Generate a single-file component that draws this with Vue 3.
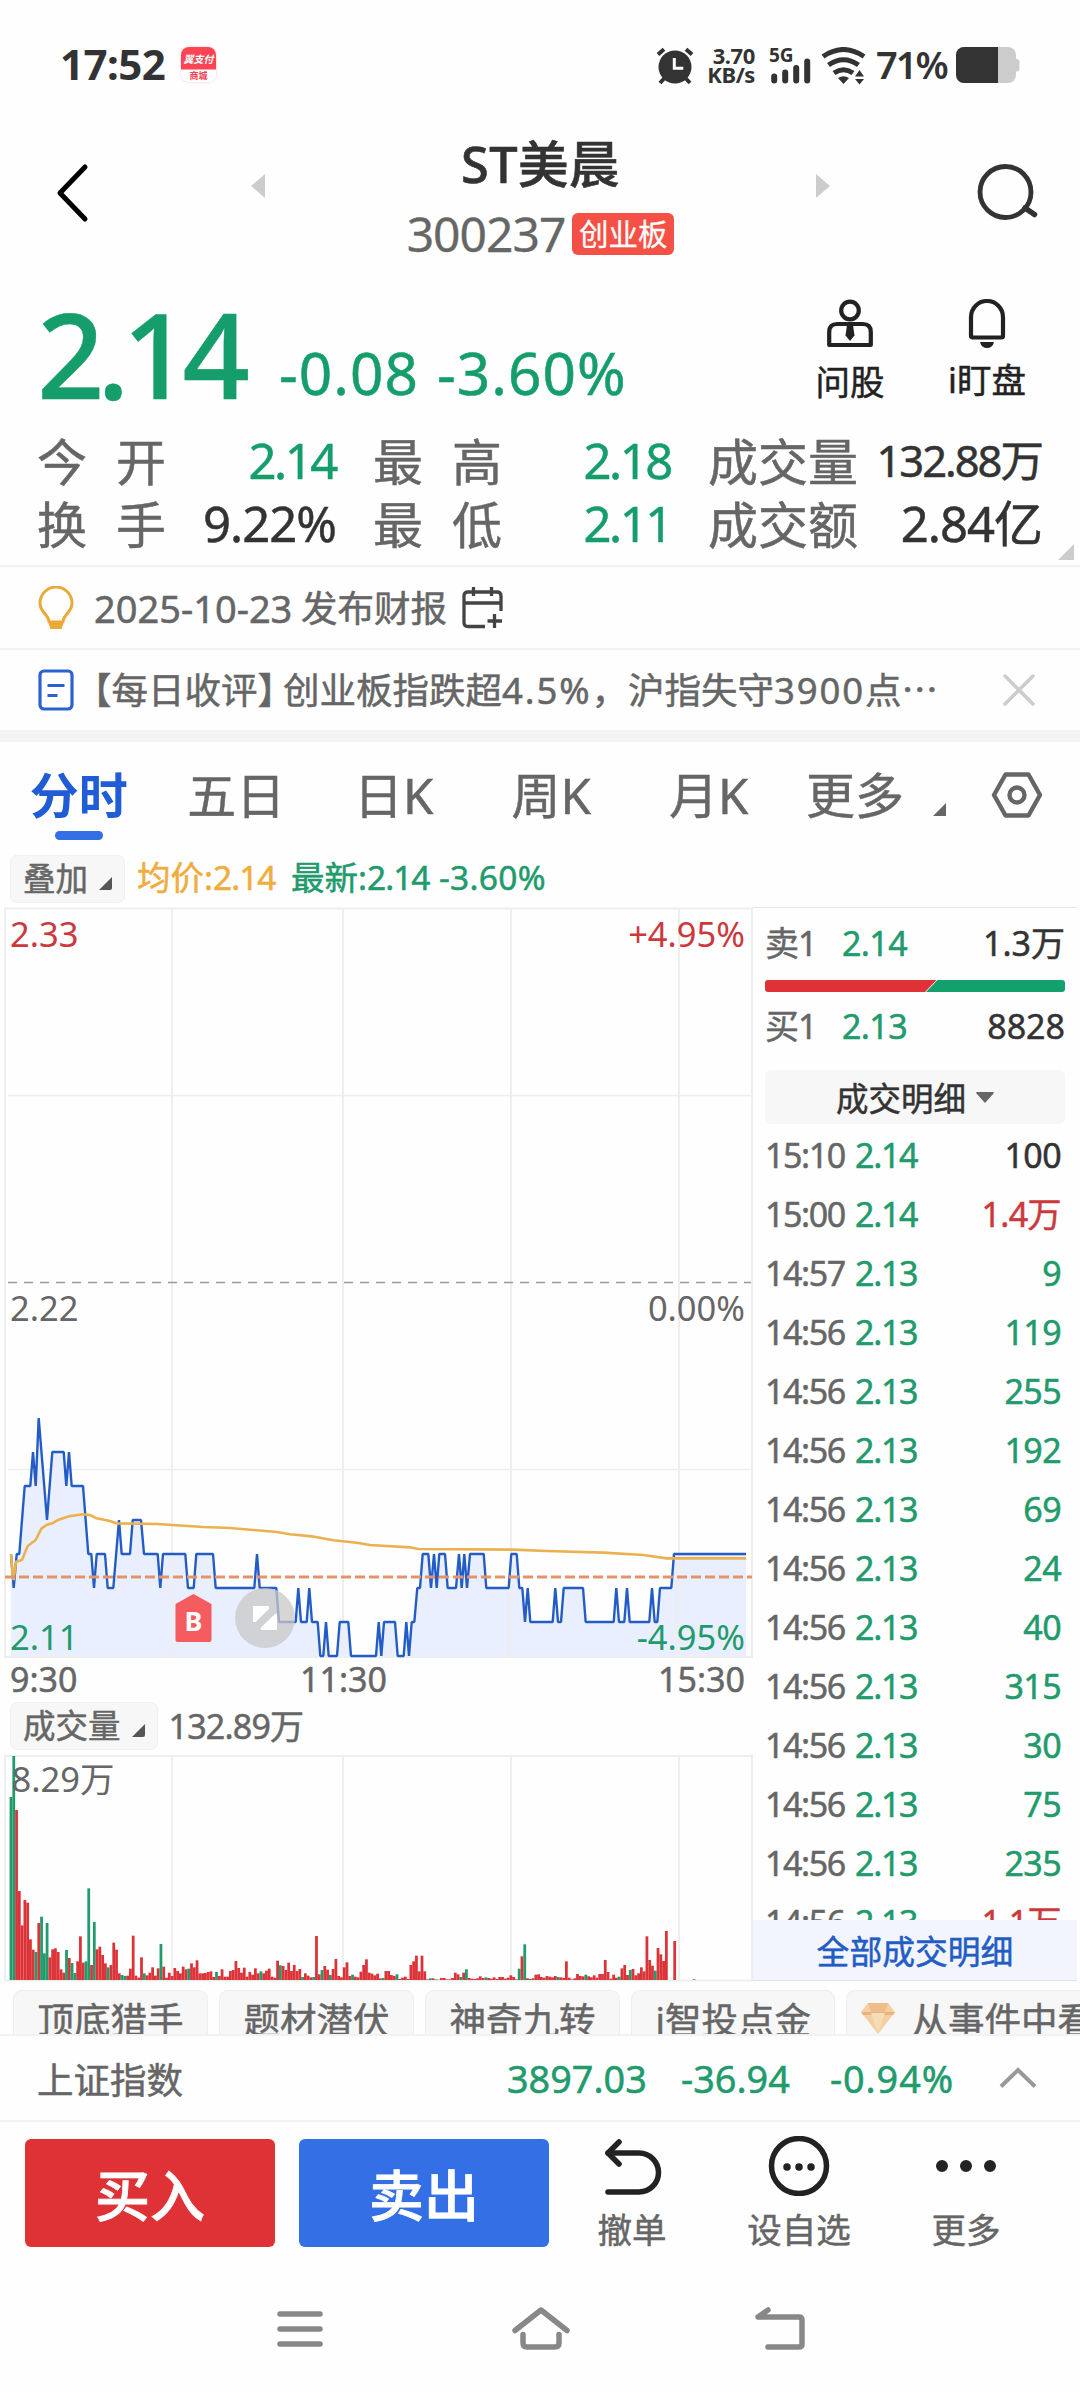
<template>
  <div class="screen">
    <div class="status">
      <span class="clock">17:52</span>
      <span class="pay"><i>翼支付</i><b>商城</b></span>
      <div class="status-right">
        <svg class="alarm" width="38" height="38" viewBox="0 0 38 38">
          <circle cx="19" cy="20" r="16.5" fill="#333" />
          <path d="M2 7.5L8 2.2M36 7.5L30 2.2M4 36l5-5.500M34 36l-5-5.500" stroke="#333" stroke-width="4" fill="none" />
          <path d="M18.300 11v10.300h9" stroke="#fff" stroke-width="3" fill="none" />
        </svg>
        <span class="speed"><i>3.70</i><i>KB/s</i></span>
        <svg class="signal" width="43" height="38" viewBox="0 0 43 38">
          <text x="0" y="14.500" class="g5">5G</text>
          <path d="M5.200 29.500v4M16.200 25.500v8M27.200 21v12.500M38.200 14.500v19" stroke="#333" stroke-width="6" stroke-linecap="round" />
        </svg>
        <svg class="wifi" width="46" height="38" viewBox="0 0 46 38">
          <g fill="none" stroke="#333" stroke-width="5">
            <path d="M2 9.500q20.500-14 41 0" />
            <path d="M7.500 18q15-10.500 30 0" />
            <path d="M13 26q9.500-6.500 19 0" />
          </g>
          <path d="M17 31q5.500-3.500 11 0l-5.500 6z" fill="#333" />
          <path d="M34 29.500l4.500-6.500 4.500 6.500zM34 32l4.500 5.500 4.500-5.500z" fill="#333" />
        </svg>
        <span class="percent">71%</span>
        <svg class="battery" width="64" height="36" viewBox="0 0 64 36">
          <rect x="0" y="0" width="60" height="36" rx="8" fill="#ccc" />
          <rect x="57" y="12" width="6.500" height="12.500" rx="3" fill="#ccc" />
          <path d="M8 0H42V36H8a8 8 0 0 1-8-8V8a8 8 0 0 1 8-8z" fill="#333" />
        </svg>
      </div>
    </div>

    <header class="header">
      <svg class="back" width="34" height="60" viewBox="0 0 34 60">
        <path d="M30 4L5 30l25 26" fill="none" stroke="#000" stroke-width="5" stroke-linecap="round" stroke-linejoin="round" />
      </svg>
      <svg class="prev" width="14" height="24" viewBox="0 0 14 24"><path d="M14 0v24L0 12z" fill="#ccc" /></svg>
      <div class="title">
        <h1>ST美晨</h1>
        <div class="code"><span>300237</span><em>创业板</em></div>
      </div>
      <svg class="next" width="14" height="24" viewBox="0 0 14 24"><path d="M0 0v24l14-12z" fill="#ccc" /></svg>
      <svg class="search" width="64" height="60" viewBox="0 0 64 60">
        <circle cx="29.500" cy="30" r="25.500" fill="none" stroke="#333" stroke-width="4.800" />
        <path d="M49 46l9.500 6.500" stroke="#333" stroke-width="5.500" stroke-linecap="round" />
      </svg>
    </header>

    <section class="quote">
      <div class="price-row">
        <span class="price">2.14</span>
        <span class="change">-0.08</span>
        <span class="change pct">-3.60%</span>
        <div class="tool ask">
          <svg width="48" height="50" viewBox="0 0 48 50" fill="none" stroke="#222" stroke-width="4.200">
            <circle cx="24" cy="11.500" r="8.800" />
            <path d="M3.200 46V33q0-8 8-8h25.600q8 0 8 8v13z" stroke-linejoin="round" />
            <path d="M21 26h6l1.500 10.500L24 42l-4.500-5.500z" fill="#222" stroke="none" />
          </svg>
          <span>问股</span>
        </div>
        <div class="tool watch">
          <svg width="40" height="50" viewBox="0 0 40 50">
            <path d="M4 37V18a16 16 0 0 1 32 0v19q0 1.500-1.500 1.500h-29Q4 38.500 4 37z" fill="none" stroke="#222" stroke-width="4.200" />
            <path d="M13 43h14q-1.500 6-7 6t-7-6z" fill="#222" />
          </svg>
          <span>i盯盘</span>
        </div>
      </div>
      <div class="stats">
        <div v-for="s in stats" :key="s.label" class="stat">
          <span :class="['label', { wide: s.label.length === 2 }]">{{ s.label }}</span>
          <span :class="['value', { up: s.green, small: s.small }]">{{ s.value }}</span>
        </div>
      </div>
      <svg class="corner" width="16" height="16" viewBox="0 0 16 16"><path d="M16 0v16H0z" fill="#ccc" /></svg>
    </section>

    <div class="notice">
      <svg class="bulb" width="36" height="44" viewBox="0 0 36 44" fill="none" stroke="#eba937" stroke-width="3">
        <path d="M11 36c0-8-9-9-9-19a16 16 0 0 1 32 0c0 10-9 11-9 19z" stroke-linejoin="round" />
        <path d="M11 38.500h14M12 41.500h12" />
      </svg>
      <span class="date">2025-10-23</span>
      <span>发布财报</span>
      <svg class="calendar" width="42" height="42" viewBox="0 0 42 42" fill="none" stroke="#444" stroke-width="3.300">
        <path d="M23 39.500H6q-4 0-4-4V9q0-4 4-4h29q4 0 4 4v15M2 16h37M11.500 0v9M29.500 0v9M32.500 27v14M25.500 34h14.500" />
      </svg>
    </div>

    <div class="notice news">
      <svg class="doc" width="36" height="42" viewBox="0 0 36 42" fill="none" stroke="#2b62cf" stroke-width="3.200">
        <rect x="2" y="2" width="32" height="38" rx="4" />
        <path d="M9.500 16.500h17M9.500 26.500h10" />
      </svg>
      <span class="headline">【每日收评<i>】</i>创业板指跌超<em>4.5%</em>，沪指失守<em>3900</em>点⋯</span>
      <svg class="close" width="32" height="32" viewBox="0 0 32 32">
        <path d="M2 2l28 28M30 2L2 30" stroke="#ccc" stroke-width="3.500" stroke-linecap="round" />
      </svg>
    </div>

    <nav class="tabs">
      <span v-for="(t, i) in tabs" :key="t" :class="['tab', { active: i === 0 }]">{{ t }}</span>
      <span class="more">更多</span>
      <svg class="tri" width="13" height="13" viewBox="0 0 13 13"><path d="M13 0v13H0z" fill="#666" /></svg>
      <svg class="hex" width="52" height="48" viewBox="0 0 52 48" fill="none" stroke="#666" stroke-width="4.400">
        <path d="M14.500 3.500h23L49 24 37.500 44.500h-23L3 24z" stroke-linejoin="round" />
        <circle cx="26" cy="24" r="7.500" />
      </svg>
    </nav>

    <div class="legend">
      <span class="chip">叠加<svg width="13" height="13" viewBox="0 0 13 13"><path d="M13 0v11q0 2-2 2H0z" fill="#555" /></svg></span>
      <span class="avg">均价:<i>2.14</i></span>
      <span class="latest">最新:<i>2.14</i></span>
      <span class="latest rate">-3.60%</span>
    </div>

    <main class="market">
      <div class="charts">
        <svg class="chart" width="753" height="752" viewBox="0 907 753 752">
          <path :d="areaPath" fill="#e9effe" />
          <g fill="none" stroke="#eee" stroke-width="2">
            <path d="M5 1658V908.500H752M172 908v749M343 908v749M511 908v749M679 908v749" />
            <path d="M8 1095.500h743M8 1469.500h743" stroke-width="1.500" />
            <path d="M5 1657h747M752 908v750" />
          </g>
          <path d="M8 1282.500h743" stroke="#999" stroke-width="1.300" stroke-dasharray="9 7" />
          <path :d="pricePath" fill="none" stroke="#245cc6" stroke-width="2.400" stroke-linejoin="bevel" />
          <polyline :points="avgPoints" fill="none" stroke="#ecb14f" stroke-width="2.600" />
          <path d="M5 1577h747" stroke="#e5946a" stroke-width="3" stroke-dasharray="10 4" />
          <path d="M175.500 1604l18-10 18 10v36q0 2-2 2h-32q-2 0-2-2z" fill="#f55c60" />
          <text x="193.500" y="1631" class="buy" text-anchor="middle">B</text>
          <circle cx="265" cy="1618" r="30" fill="#c8c8c8" fill-opacity="0.750" />
          <path d="M253 1607q0-1 1-1h15v3l-13.500 13H253zM277 1614v15q0 1-1 1h-15v-2.500l14-13.500z" fill="#fff" />
          <text x="10" y="946.500" class="t red">2.33</text>
          <text x="745" y="946.500" class="t red" text-anchor="end">+4.95%</text>
          <text x="10" y="1320.500" class="t grey">2.22</text>
          <text x="745" y="1320.500" class="t grey" text-anchor="end">0.00%</text>
          <text x="10" y="1650" class="t green">2.11</text>
          <text x="745" y="1650" class="t green" text-anchor="end">-4.95%</text>
        </svg>
        <div class="axis"><span>9:30</span><span>11:30</span><span>15:30</span></div>
        <div class="volume-head">
          <span class="chip">成交量<svg width="13" height="13" viewBox="0 0 13 13"><path d="M13 0v11q0 2-2 2H0z" fill="#555" /></svg></span>
          <span>132.89万</span>
        </div>
        <svg class="chart" width="753" height="228" viewBox="0 1754 753 228">
          <path d="M5 1981V1756H752M172 1756v224M343 1756v224M511 1756v224M679 1756v224M5 1980.500h747M752 1754v227" fill="none" stroke="#eee" stroke-width="2" />
          <rect v-for="b in bars" :key="b.x" :x="b.x" :y="b.y" width="2.780" :height="b.h" :fill="b.fill" />
          <text x="11.500" y="1792" class="t grey">8.29万</text>
        </svg>
      </div>

      <aside class="book">
        <div class="level"><span>卖1</span><b>2.14</b><em>1.3万</em></div>
        <svg class="ratio" width="300" height="12" viewBox="0 0 300 12">
          <path d="M3 0H171.500L160 12H3q-3 0-3-3V3q0-3 3-3z" fill="#df3237" />
          <path d="M172.500 0H297q3 0 3 3v6q0 3-3 3H161z" fill="#12a06c" />
        </svg>
        <div class="level"><span>买1</span><b>2.13</b><em>8828</em></div>
        <div class="detail">成交明细<svg width="18" height="11" viewBox="0 0 18 11"><path d="M1 0h16q1.500.500.500 1.500L9 11 .500 1.500Q-.500.500 1 0z" fill="#666" /></svg></div>
        <div class="ticks">
          <div v-for="(t, i) in ticks" :key="i" class="tick">
            <span>{{ t[0] }}</span><b>{{ t[1] }}</b><em :class="t[3]">{{ t[2] }}</em>
          </div>
        </div>
        <div class="all">全部成交明细</div>
      </aside>
    </main>

    <div class="tags">
      <span v-for="t in tags" :key="t" class="tag">{{ t }}</span>
      <span class="tag gem">
        <svg width="34" height="31" viewBox="0 0 34 31">
          <path d="M7 0h20l7 9-17 22L0 9z" fill="#f4cfa2" />
          <path d="M7 0h20l-3 9H10z" fill="#efbd8a" />
          <path d="M0 9h34l-2 3H2z" fill="#eab27c" />
          <path d="M10 10h14l-7 20z" fill="#f8dcb8" />
        </svg>从事件中看
      </span>
    </div>

    <div class="index">
      <span class="name">上证指数</span>
      <b>3897.03</b><b>-36.94</b><b class="wider">-0.94%</b>
      <svg width="38" height="22" viewBox="0 0 38 22"><path d="M2 19.500L19 3l17 16.500" fill="none" stroke="#999" stroke-width="4" /></svg>
    </div>

    <div class="actions">
      <button class="buy-btn">买入</button>
      <button class="sell-btn">卖出</button>
      <div class="action undo">
        <svg width="62" height="60" viewBox="0 0 62 60" fill="none" stroke="#222" stroke-width="5.500">
          <path d="M18 6L7 17l11 11" stroke-linecap="round" stroke-linejoin="round" />
          <path d="M7 17h31a19.500 19.500 0 0 1 0 39H7" stroke-linecap="round" />
        </svg>
        <span>撤单</span>
      </div>
      <div class="action fav">
        <svg width="62" height="60" viewBox="0 0 62 60">
          <circle cx="31" cy="30" r="27.500" fill="none" stroke="#222" stroke-width="5.500" />
          <path d="M19 31h.01M31 31h.01M43 31h.01" stroke="#222" stroke-width="7.500" stroke-linecap="round" />
        </svg>
        <span>设自选</span>
      </div>
      <div class="action rest">
        <svg width="62" height="60" viewBox="0 0 62 60">
          <path d="M7 30h.01M31 30h.01M55 30h.01" stroke="#222" stroke-width="12" stroke-linecap="round" />
        </svg>
        <span>更多</span>
      </div>
    </div>

    <div class="system">
      <svg width="46" height="38" viewBox="0 0 46 38"><path d="M3 4h40M3 19h40M3 34h40" stroke="#888" stroke-width="5.500" stroke-linecap="round" /></svg>
      <svg width="60" height="46" viewBox="0 0 60 46" fill="none" stroke="#888" stroke-width="5.500" stroke-linecap="round" stroke-linejoin="round">
        <path d="M4 24.500L30 4l26 20.500" />
        <path d="M12 28.500V37q0 4 4 4h28q4 0 4-4v-8.500" />
      </svg>
      <svg width="52" height="46" viewBox="0 0 52 46" fill="none" stroke="#888" stroke-width="5.500" stroke-linecap="round" stroke-linejoin="round">
        <path d="M14 4L4 11h41q3 0 3 3v24q0 3-3 3H14" />
      </svg>
    </div>
  </div>
</template>

<script setup>
const stats = [
  { label: '今开', value: '2.14', green: true },
  { label: '最高', value: '2.18', green: true },
  { label: '成交量', value: '132.88万', small: true },
  { label: '换手', value: '9.22%' },
  { label: '最低', value: '2.11', green: true },
  { label: '成交额', value: '2.84亿' }
]

const tabs = ['分时', '五日', '日K', '周K', '月K']
const tags = ['顶底猎手', '题材潜伏', '神奇九转', 'i智投点金']

const ticks = [
  ['15:10', '2.14', '100', 'flat'],
  ['15:00', '2.14', '1.4万', 'red'],
  ['14:57', '2.13', '9'],
  ['14:56', '2.13', '119'],
  ['14:56', '2.13', '255'],
  ['14:56', '2.13', '192'],
  ['14:56', '2.13', '69'],
  ['14:56', '2.13', '24'],
  ['14:56', '2.13', '40'],
  ['14:56', '2.13', '315'],
  ['14:56', '2.13', '30'],
  ['14:56', '2.13', '75'],
  ['14:56', '2.13', '235'],
  ['14:56', '2.13', '1.1万', 'red']
]

// x (in thirds of a pixel) and the cents above 2.00
const prices = `33,14 41,13 50,14 58,14 74,16 91,16 99,17 107,16 116,18 141,15 157,17 191,17 199,16 207,17 215,16
249,16 265,14 274,14 282,13 290,14 315,14 323,13 340,13 357,15 365,14 390,14 398,15 423,15 432,14 473,14 481,13
489,14 556,14 564,13 581,13 589,14 639,14 647,13 763,13 771,14 779,13 829,13 837,12 887,12 895,13 903,12 920,12
928,13 936,12 953,12 961,11 970,11 978,12 986,11 1011,11 1019,12 1045,12 1053,11 1128,11 1136,12 1144,11 1152,12
1185,12 1193,11 1211,11 1219,12 1227,11 1235,12 1243,12 1252,13 1260,13 1268,14 1285,14 1293,13 1302,14 1310,13
1318,14 1335,14 1343,13 1368,13 1377,14 1385,13 1393,14 1401,13 1410,14 1451,14 1459,13 1526,13 1534,14 1550,14
1558,13 1567,13 1575,12 1583,13 1591,12 1658,12 1666,13 1674,12 1683,12 1691,13 1749,13 1757,12 1841,12 1849,13
1857,12 1873,12 1881,13 1889,12 1948,12 1956,13 1964,12 1972,12 1980,13 2014,13 2022,14 2238,14`
  .split(/\s+/)
  .map((p) => p.split(',').map(Number))

const pricePath = 'M' + prices.map(([x, c]) => `${(x / 3).toFixed(1)} ${1554 - (c - 14) * 34}`).join('L')
const areaPath = `${pricePath}V1657H11z`

const avgPoints = [
  [33, 522], [38, 590], [41, 600], [48, 545], [66, 540], [83, 498], [107, 480], [124, 446], [141, 434],
  [157, 430], [174, 420], [207, 409], [249, 403], [270, 405], [290, 415], [330, 423], [350, 430], [470, 432],
  [610, 441], [690, 444], [830, 456], [870, 463], [935, 469], [1000, 481], [1070, 488], [1110, 495],
  [1230, 502], [1255, 507], [1540, 509], [1640, 513], [1810, 518], [1930, 525], [2000, 535], [2238, 535]
].map(([x, y]) => `${x / 3},${1380 + y / 3}`).join(' ')

// one entry per minute, g marks a falling bar
const volumes = `549g 672g 510 267 164 240 232 122 91 84g 171 190g 80g 171g 68 92 95 84 32 22 90g 66 51g 21g 56 131 52
56g 275g 45 174g 92 100 75 50 38g 45 112 91 20 15g 12g 13 34 133 13 7 68 20g 14 22 38 13 35 108g 40 7 22 12 36 27 20
40 32 34g 50 38 59 20 20 21 24 26 9 24g 12 32 10 10 27 30 57 36 22 37 10 24 16 35 20 26g 20 28 34 10 7 58 44g 42 30
52 27 45 27 33 9g 20 13 8 9g 132 17 30g 42 31 15g 33 63 12 8 38 53 12 16g 10 8 25 45 62 22 19 14 19 5 6g 27 27 15 12
17g 3 7 10 3 45 56 73 26 73 26 2 5g 5 2g 1 6 6 2 2 6 22 17 9g 22 32g 6 4 3 5 11 6 8g 6 4 8 3 9 9 4 7 14 9 2 34g 71
107g 5 3g 5 16 17 9 7 12 10 8 12 9g 8 6 56 7 2 5 18 12 11 16g 11 8 14 7 18 18 60 24 4 16 7 10g 35 45 15 30g 33 14
20 38 26 131 60 43 28g 96 77 57 147 0 0 117 0 0 0 0 0 0 2`.split(/\s+/)

const bars = volumes.map((v, i) => {
  const h = parseInt(v) / 3
  return {
    x: 9.6 + i * 2.777,
    y: 1980 - h,
    h,
    fill: v.endsWith('g') ? '#219a6c' : '#dc3338'
  }
})
</script>

<style>
body {
  margin: 0;
  background: #fefefe;
}
</style>

<style scoped>
.screen {
  width: 1080px;
  height: 2392px;
  overflow: hidden;
  background: #fefefe;
  color: #666;
  font-family: "Noto Sans", "Noto Sans CJK SC", sans-serif;
  -webkit-text-stroke: 0.5px currentColor;
}

i,
em,
b {
  font-style: normal;
  font-weight: 400;
}

svg {
  display: block;
  flex: none;
}

span {
  white-space: nowrap;
}

/* Status bar */
.status {
  display: flex;
  height: 36px;
  padding: 47px 60px 0;
  color: #333;
  -webkit-text-stroke: 0;
}

.clock {
  width: 121px;
  font-size: 42px;
  font-weight: 700;
  line-height: 34px;
  letter-spacing: -0.5px;
}

.pay {
  width: 35px;
  height: 35px;
  border-radius: 8px;
  overflow: hidden;
  background: linear-gradient(#fb4454 22px, #fff 23px);
  box-shadow: 0 0 2px #f5b0b4;
  text-align: center;
}

.pay i,
.pay b {
  display: block;
  height: 22px;
  color: #fff;
  font-size: 10px;
  font-weight: 700;
  font-style: italic;
  line-height: 25px;
}

.pay b {
  height: 12px;
  color: #f34455;
  font-size: 9px;
  font-style: normal;
  line-height: 13px;
}

.status-right {
  display: flex;
  margin-left: auto;
}

.speed {
  width: 48px;
  margin: 0 14px 0 13px;
  text-align: right;
  font-size: 22px;
  letter-spacing: -0.4px;
}

.speed i {
  display: block;
  font-weight: 700;
  line-height: 17px;
  height: 19px;
}

.signal {
  margin-right: 9px;
}

.g5 {
  font-size: 19px;
  font-weight: 700;
  fill: #333;
}

.percent {
  width: 81px;
  padding-left: 9px;
  box-sizing: border-box;
  font-size: 38px;
  font-weight: 600;
  line-height: 34px;
  letter-spacing: -2px;
}

.battery {
  margin-left: 8px;
}

/* Header */
.header {
  display: flex;
  align-items: flex-start;
  height: 197px;
  padding: 0 40px 0 55px;
}

.back {
  margin-top: 80px;
}

.prev {
  margin: 91px 0 0 162px;
}

.title {
  flex: 1;
  text-align: center;
}

.title h1 {
  margin: 51px 0 0;
  font-size: 50.5px;
  font-weight: 500;
  line-height: 60px;
  letter-spacing: 0.5px;
  color: #333;
  -webkit-text-stroke: 0.6px #333;
}

.code {
  display: flex;
  justify-content: center;
  align-items: center;
  margin-top: 18px;
  height: 44px;
  font-size: 48px;
  line-height: 46px;
  letter-spacing: -1px;
  -webkit-text-stroke: 0.3px currentColor;
}

.code em {
  margin-left: 7px;
  width: 102px;
  height: 42px;
  line-height: 42px;
  border-radius: 6px;
  background: #f45046;
  color: #fff;
  font-size: 29.5px;
  letter-spacing: 0;
}

.next {
  margin: 91px 146px 0 0;
}

.search {
  margin-top: 79px;
}

/* Quote */
.quote {
  position: relative;
  height: 285px;
  border-bottom: 2px solid #f2f2f2;
}

.price-row {
  display: flex;
  height: 149px;
  color: #159d6b;
}

.price {
  width: 242px;
  padding-left: 37px;
  font-size: 118px;
  font-weight: 500;
  line-height: 147px;
  letter-spacing: -7.2px;
}

.change {
  width: 158px;
  padding-top: 56px;
  font-size: 58.5px;
  line-height: 73px;
  letter-spacing: 1px;
}

.pct {
  width: 361px;
}

.tool {
  display: flex;
  flex-direction: column;
  align-items: center;
  padding-top: 19px;
  color: #222;
  font-size: 34.5px;
}

.tool span {
  margin-top: 13px;
  line-height: 40px;
}

.ask {
  width: 104px;
}

.watch {
  width: 170px;
}

.watch span {
  margin-top: 11px;
}

.stats {
  display: grid;
  grid-template-columns: 299px 298px 334px;
  column-gap: 37px;
  grid-auto-rows: 63px;
  padding-left: 37px;
}

.stat {
  display: flex;
  justify-content: space-between;
  font-size: 50px;
  line-height: 63px;
}

.wide {
  letter-spacing: 29px;
}

.label {
  margin-top: 2px;
}

.value {
  color: #333;
  font-size: 49px;
  letter-spacing: -1px;
}

.up {
  color: #159d6b;
  letter-spacing: -2.4px;
}

.small {
  font-size: 43.5px;
  letter-spacing: -2px;
}

.corner {
  position: absolute;
  right: 6px;
  bottom: 5px;
}

/* Notices */
.notice {
  display: flex;
  align-items: center;
  height: 81px;
  padding-left: 38px;
  border-bottom: 2px solid #f2f2f2;
  font-size: 36.5px;
  line-height: 48px;
}

.date {
  width: 207px;
  margin-left: 20px;
  font-size: 38px;
}

.calendar {
  margin-left: 15px;
}

.news {
  height: 80px;
  border-bottom: 12px solid #f4f4f4;
}

.headline {
  width: 900px;
  margin-left: 1px;
}

.headline i {
  margin-right: -11px;
}

.headline em {
  letter-spacing: 1.9px;
}

.close {
  margin-left: 28px;
}

/* Tabs */
.tabs {
  display: flex;
  height: 109px;
  font-size: 49px;
  line-height: 107px;
}

.tab {
  position: relative;
  width: 157.5px;
  text-align: center;
}

.active {
  color: #1f5cd6;
  font-weight: 700;
  -webkit-text-stroke: 0;
}

.active::after {
  content: "";
  position: absolute;
  left: 55px;
  top: 89px;
  width: 48px;
  height: 9px;
  border-radius: 5px;
  background: #346fe5;
}

.more {
  width: 117px;
  margin-left: 18.5px;
}

.tri {
  margin: 61px 45px 0 10px;
}

.hex {
  margin-top: 29px;
}

/* Legend */
.legend {
  display: flex;
  align-items: center;
  height: 56px;
  padding-left: 10px;
  font-size: 33.5px;
  line-height: 44px;
}

.legend > span:not(.chip) {
  margin-top: -5px;
}

.legend i {
  letter-spacing: -1px;
}

.chip {
  display: flex;
  align-items: center;
  height: 48px;
  box-sizing: border-box;
  padding: 0 12px;
  border: 1px solid #f0f0f0;
  border-radius: 7px;
  background: #f7f7f7;
  font-size: 32.5px;
  line-height: 46px;
}

.chip svg {
  margin: 8px 0 0 11px;
}

.avg {
  width: 154px;
  margin-left: 12px;
  color: #f0ac3f;
}

.latest {
  width: 148px;
  color: #219a6c;
}

.rate {
  letter-spacing: 0.3px;
}

/* Charts */
.market {
  display: flex;
  height: 1075px;
}

.charts {
  width: 753px;
}

.t {
  font-size: 34.5px;
}

.red {
  fill: #cc393d;
}

.grey {
  fill: #666;
}

.green {
  fill: #219a6c;
}

.buy {
  font-size: 27px;
  font-weight: 700;
  fill: #fff;
}

.axis {
  display: grid;
  grid-template-columns: 1fr 1fr 1fr;
  height: 43px;
  padding: 0 8px 0 10px;
  font-size: 34px;
  line-height: 40px;
}

.axis span:nth-child(2) {
  margin-left: -68px;
  text-align: center;
}

.axis span:last-child {
  text-align: right;
}

.volume-head {
  display: flex;
  align-items: center;
  gap: 11px;
  height: 48px;
  padding: 0 0 4px 10px;
  font-size: 34px;
  line-height: 50px;
  letter-spacing: -0.8px;
}

.volume-head .chip {
  letter-spacing: 0;
  line-height: 48px;
}

/* Order book */
.book {
  width: 324px;
  box-sizing: border-box;
  padding: 0 12px;
  border-top: 1px solid #e6e6e6;
}

.level,
.tick {
  display: flex;
  font-size: 34px;
  letter-spacing: -1px;
}

.level {
  height: 72px;
  line-height: 70px;
}

.level span {
  width: 77px;
}

.ratio + .level {
  line-height: 68px;
  height: 78px;
}

b {
  color: #219a6c;
}

.level b {
  letter-spacing: -0.6px;
}

.level em {
  margin-left: auto;
  color: #333;
  letter-spacing: 0;
}

.detail {
  display: flex;
  justify-content: center;
  align-items: center;
  height: 54px;
  border-radius: 6px;
  background: #f7f7f7;
  color: #333;
  font-size: 32.5px;
}

.detail svg {
  margin-left: 10px;
}

.ticks {
  height: 796px;
  overflow: hidden;
}

.tick {
  height: 59px;
  line-height: 63px;
}

.tick span {
  width: 90px;
  letter-spacing: -1.4px;
}

.tick b {
  letter-spacing: -1.3px;
}

.tick em {
  margin: 0 4px 0 auto;
  color: #219a6c;
  letter-spacing: -0.6px;
}

.tick .flat {
  color: #333;
}

.tick .red {
  color: #cc393d;
}

.all {
  height: 60px;
  margin: 0 -12px;
  border-bottom: 1px solid #dfe3ea;
  background: #f2f5fd;
  color: #245cc6;
  text-align: center;
  font-size: 32.8px;
  line-height: 63px;
}

/* Tags */
.tags {
  display: flex;
  gap: 11px;
  height: 44px;
  padding: 8px 0 0 13px;
  overflow: hidden;
  border-bottom: 2px solid #f2f2f2;
}

.tag {
  flex: none;
  height: 60px;
  padding: 0 23.5px;
  border: 1px solid #eee;
  border-radius: 9px;
  background: #f7f7f7;
  font-size: 36.5px;
  line-height: 58px;
}

.gem {
  display: flex;
  padding-left: 14px;
}

.gem svg {
  margin: 12px 16px 0 0;
}

/* Index bar */
.index {
  display: flex;
  align-items: center;
  height: 84px;
  padding-left: 37px;
  border-bottom: 2px solid #f2f2f2;
  font-size: 36.5px;
}

.index b {
  width: 174px;
  font-size: 37.8px;
}

.index b + b {
  width: 149px;
}

.index .wider {
  width: 169px;
  letter-spacing: 0.9px;
}

.index .name {
  width: 470px;
}

/* Actions */
.actions {
  display: flex;
  height: 137px;
  padding: 17px 0 0 25px;
}

button {
  width: 250px;
  height: 108px;
  margin-right: 24px;
  padding: 0;
  border: 0;
  border-radius: 6px;
  color: #fff;
  font-family: inherit;
  font-size: 55px;
  font-weight: 500;
  line-height: 112px;
  -webkit-text-stroke: 0.8px #fff;
}

.buy-btn {
  background: #df3237;
}

.sell-btn {
  background: #346fe5;
}

.action {
  display: flex;
  flex-direction: column;
  align-items: center;
  width: 167px;
  margin-top: -3px;
  font-size: 34.5px;
}

.action span {
  margin-top: 13px;
  line-height: 42px;
}

.undo {
  width: 118px;
}

.fav {
  width: 216px;
}

.rest {
  width: 118px;
}

/* System navigation */
.system {
  display: flex;
  align-items: center;
  justify-content: space-between;
  height: 46px;
  padding: 30px 274px 0 277px;
}

.system svg:nth-child(2) {
  margin-left: 4px;
}
</style>
